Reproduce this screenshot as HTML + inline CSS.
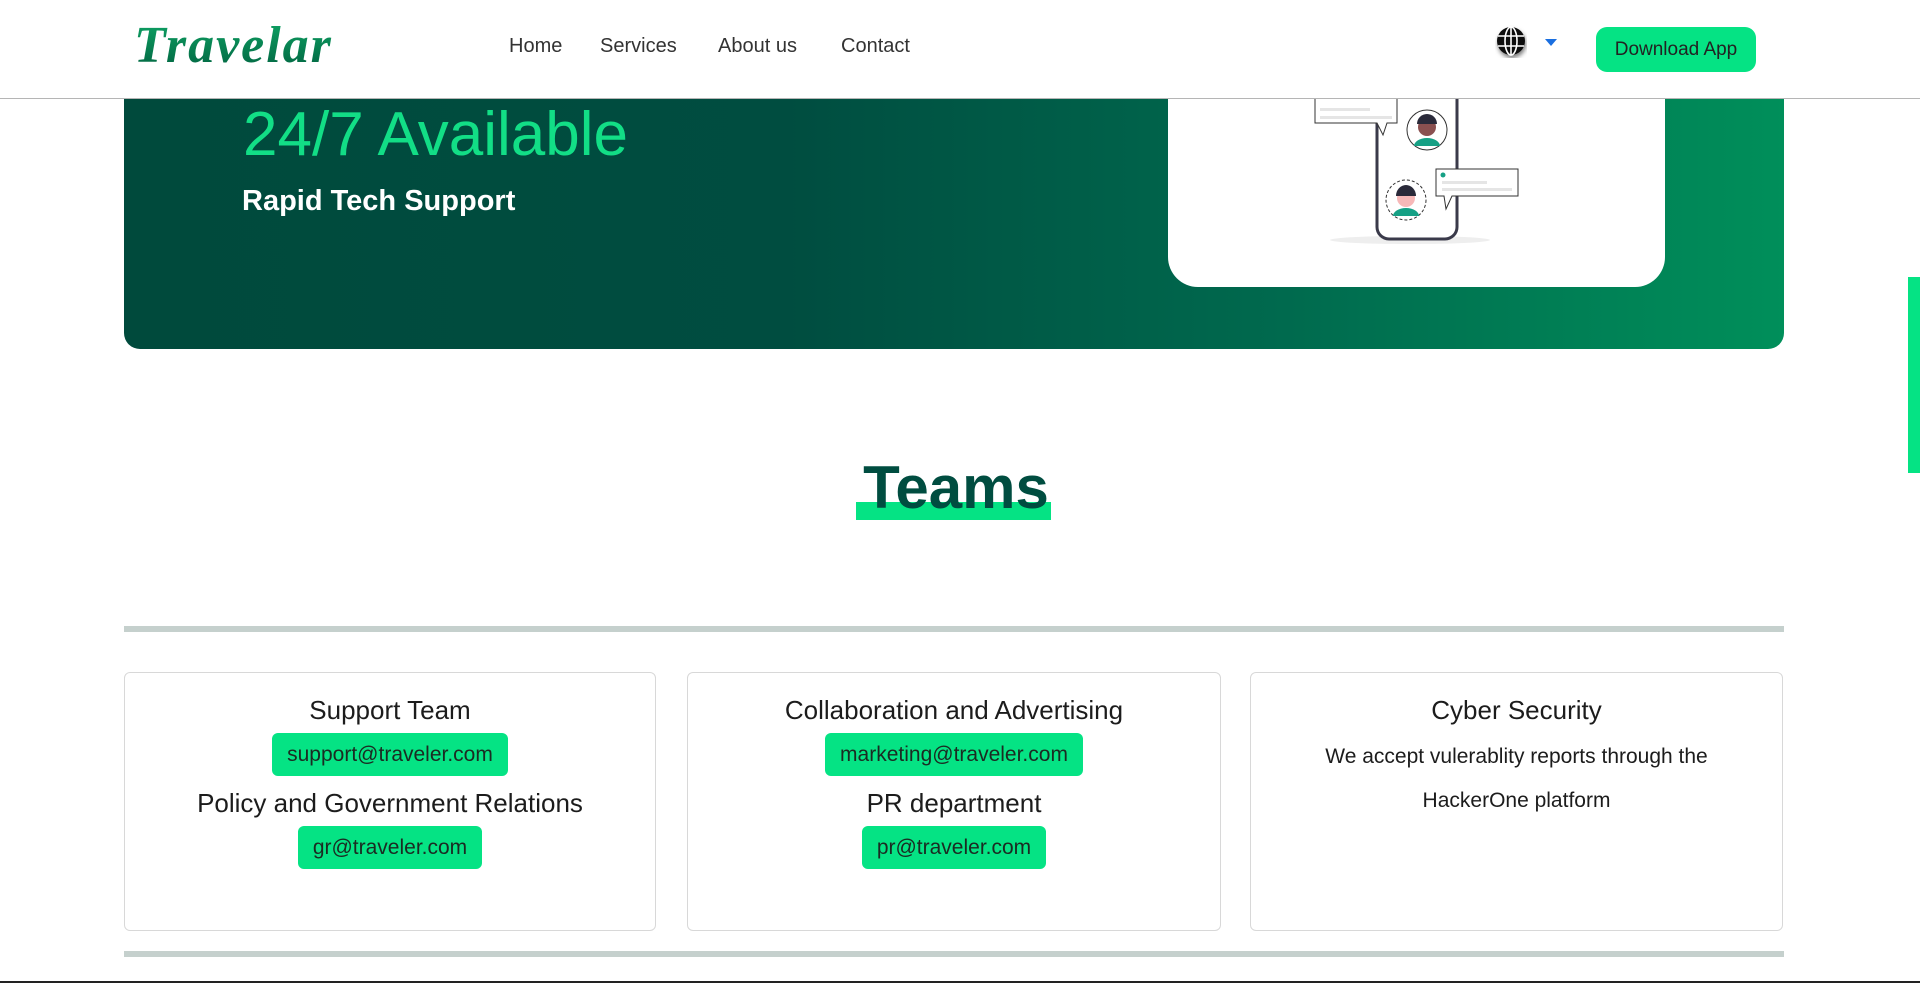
<!DOCTYPE html>
<html><head><meta charset="utf-8"><style>
*{margin:0;padding:0;box-sizing:border-box}
body{width:1920px;height:983px;overflow:hidden;background:#fff;font-family:"Liberation Sans",sans-serif;position:relative}
.hdr{position:absolute;left:0;top:0;width:1920px;height:99px;background:#fff;border-bottom:1px solid #b5b5b5;z-index:5}
.logo{position:absolute;left:134px;top:16px;font-family:"Liberation Serif",serif;font-weight:bold;font-style:italic;font-size:52px;color:#067a4c;background:linear-gradient(#10a867,#005f3e);-webkit-background-clip:text;background-clip:text;-webkit-text-fill-color:transparent;letter-spacing:2px}
.nav a{position:absolute;top:35px;font-size:20px;color:#333;text-decoration:none}
.btn{position:absolute;left:1596px;top:27px;width:160px;height:45px;background:#05e384;border-radius:11px;font-size:19px;color:#222;text-align:center;line-height:45px}
.banner{position:absolute;left:124px;top:40px;width:1660px;height:309px;border-radius:16px;background:linear-gradient(90deg,#004a3c 0%,#004d40 40%,#006a4e 70%,#008f5a 100%)}
.card{position:absolute;left:1168px;top:40px;width:497px;height:247px;background:#fff;border-radius:30px}
.h1{position:absolute;left:243px;top:100px;font-size:62px;color:#12de86;line-height:70px}
.h2{position:absolute;left:242px;top:185px;font-size:29px;font-weight:bold;color:#fff}
.sb{position:absolute;left:1908px;top:277px;width:12px;height:196px;background:#05e384}
.teams{position:absolute;left:0;width:1920px;top:450px;text-align:center;font-size:60px;font-weight:bold;color:#004d40;line-height:76px;padding-right:8px}
.ul{position:absolute;left:856px;top:502px;width:195px;height:18px;background:#05e384}
.rule{position:absolute;left:124px;width:1660px;height:6px;background:#c5d0cd}
.tc{position:absolute;top:672px;height:259px;border:1px solid #d8d8d8;border-radius:6px;text-align:center;color:#1c1c1c}
.tc .t{font-size:26px;line-height:38px}
.pill{display:inline-block;background:#05e384;border-radius:6px;font-size:21px;padding:0 15px;height:43px;line-height:43px;color:#1b2b22;margin:4px 0 8px}
.cy{font-size:21px;line-height:44px;margin-top:6px}
</style></head><body>
<div class="banner"></div>
<div class="card">
<svg width="497" height="247" viewBox="1168 40 497 247" style="position:absolute;left:0;top:0">
<ellipse cx="1410" cy="240" rx="80" ry="4" fill="#eee"/>
<rect x="1377" y="40" width="80" height="199" rx="12" fill="#fff" stroke="#3a3a4a" stroke-width="3"/>
<path d="M1315 90 h82 v33 h-10 l-4 12 -6 -12 h-62z" fill="#fff" stroke="#333" stroke-width="1"/>
<rect x="1320" y="108" width="50" height="3" fill="#e5e5e5"/><rect x="1320" y="116" width="72" height="3" fill="#e5e5e5"/>
<circle cx="1427" cy="130" r="20" fill="#fff" stroke="#333" stroke-width="1"/>
<circle cx="1427" cy="127" r="9" fill="#8a5050"/><path d="M1417 124 a10 10 0 0 1 20 0z" fill="#2a2a3a"/><path d="M1414 146 a13 8 0 0 1 26 0z" fill="#16a085"/>
<path d="M1436 169 h82 v27 h-66 l-6 13 -2 -13 h-8z" fill="#fff" stroke="#333" stroke-width="1"/>
<circle cx="1443" cy="175" r="2.5" fill="#16a085"/><rect x="1442" y="181" width="45" height="3" fill="#e5e5e5"/><rect x="1442" y="188" width="70" height="3" fill="#e5e5e5"/>
<circle cx="1406" cy="200" r="20" fill="#fff" stroke="#333" stroke-width="1" stroke-dasharray="3 2"/>
<circle cx="1406" cy="198" r="9" fill="#f7b8b8"/><path d="M1396 196 a10 11 0 0 1 20 0z" fill="#2a2a3a"/><path d="M1393 216 a13 8 0 0 1 26 0z" fill="#16a085"/>
</svg>
</div>
<div class="h1">24/7 Available</div>
<div class="h2">Rapid Tech Support</div>
<div class="hdr">
<div class="logo">Travelar</div>
<div class="nav"><a style="left:509px">Home</a><a style="left:600px">Services</a><a style="left:718px">About us</a><a style="left:841px">Contact</a></div>
<svg style="position:absolute;left:1495px;top:25px" width="32" height="34" viewBox="0 0 32 34"><defs><filter id="s"><feDropShadow dx="1" dy="3" stdDeviation="2" flood-opacity=".5"/></filter></defs><g filter="url(#s)"><circle cx="16" cy="16" r="14" fill="#111"/><g stroke="#fff" stroke-width="1.6" fill="none"><ellipse cx="16" cy="16" rx="6" ry="14"/><line x1="16" y1="2" x2="16" y2="30"/><line x1="3" y1="11" x2="29" y2="11"/><line x1="3" y1="21" x2="29" y2="21"/></g></g></svg>
<svg style="position:absolute;left:1545px;top:39px" width="12" height="8"><path d="M0 0h12L6 7z" fill="#1a6fe0"/></svg>
<div class="btn">Download App</div>
</div>
<div class="sb"></div>
<div class="ul"></div>
<div class="teams">Teams</div>
<div class="rule" style="top:626px"></div>
<div class="tc" style="left:124px;width:532px;padding-top:18px">
<div class="t">Support Team</div><div class="pill">support@traveler.com</div>
<div class="t">Policy and Government Relations</div><div class="pill">gr@traveler.com</div></div>
<div class="tc" style="left:687px;width:534px;padding-top:18px">
<div class="t">Collaboration and Advertising</div><div class="pill">marketing@traveler.com</div>
<div class="t">PR department</div><div class="pill">pr@traveler.com</div></div>
<div class="tc" style="left:1250px;width:533px;padding-top:18px">
<div class="t">Cyber Security</div><div class="cy">We accept vulerablity reports through the<br>HackerOne platform</div></div>
<div class="rule" style="top:951px"></div>
<div style="position:absolute;left:0;top:981px;width:1920px;height:2px;background:#222"></div>
</body></html>
